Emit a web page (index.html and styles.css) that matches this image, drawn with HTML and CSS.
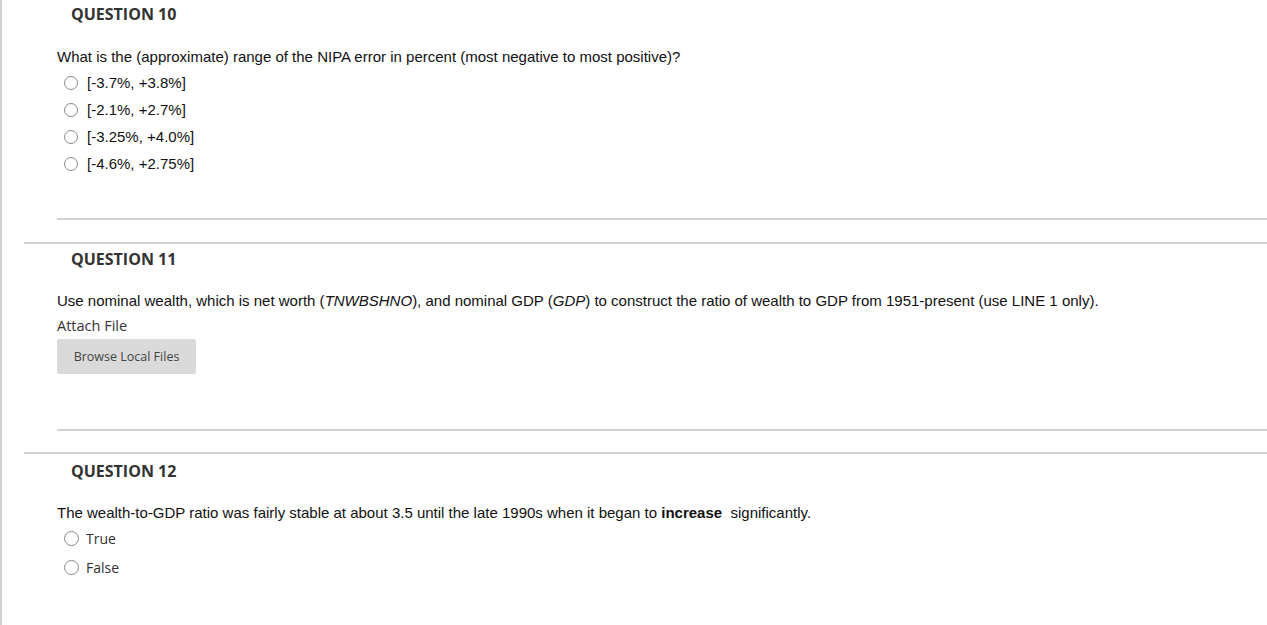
FILE: index.html
```html
<!DOCTYPE html>
<html>
<head>
<meta charset="utf-8">
<link rel="stylesheet" href="styles.css">
</head>
<body>
<div class="page">
  <section class="question q10">
    <h3 class="qtitle">QUESTION 10</h3>
    <p class="qtext">What is the (approximate) range of the NIPA error in percent (most negative to most positive)?</p>
    <ul class="options arial">
      <li><span class="radio"></span>[-3.7%, +3.8%]</li>
      <li><span class="radio"></span>[-2.1%, +2.7%]</li>
      <li><span class="radio"></span>[-3.25%, +4.0%]</li>
      <li><span class="radio"></span>[-4.6%, +2.75%]</li>
    </ul>
    <div class="sep sep-10"></div>
  </section>
  <section class="question q11">
    <h3 class="qtitle">QUESTION 11</h3>
    <p class="qtext">Use nominal wealth, which is net worth (<i>TNWBSHNO</i>), and nominal GDP (<i>GDP</i>) to construct the ratio of wealth to GDP from 1951-present (use LINE 1 only).</p>
    <div class="attach">Attach File</div>
    <button class="browse">Browse Local Files</button>
    <div class="sep sep-11"></div>
  </section>
  <section class="question q12">
    <h3 class="qtitle">QUESTION 12</h3>
    <p class="qtext">The wealth-to-GDP ratio was fairly stable at about 3.5 until the late 1990s when it began to <b>increase</b>&nbsp; significantly.</p>
    <ul class="options sans">
      <li><span class="radio"></span>True</li>
      <li><span class="radio"></span>False</li>
    </ul>
  </section>
</div>
</body>
</html>
```
FILE: styles.css
```css
html, body {
  margin: 0;
  padding: 0;
  background: #fff;
}
.page {
  min-height: 625px;
  border-left: 2px solid #d0d0d0;
  display: flex;
  flex-direction: column;
  padding-left: 22px;
}
.question {
  display: flex;
  flex-direction: column;
  padding-left: 33px;
}
.q11, .q12 {
  border-top: 2px solid #d3d3d3;
}
.qtitle {
  margin: 0;
  padding-left: 14px;
  font-family: "Open Sans", sans-serif;
  font-weight: 700;
  font-size: 16px;
  line-height: 24px;
  color: #333;
}
.q10 .qtitle { margin-top: 2px; }
.q11 .qtitle { margin-top: 3px; }
.q12 .qtitle { margin-top: 5px; }
.qtext {
  margin: 21px 0 0 0;
  font-family: "Liberation Sans", Arial, sans-serif;
  font-size: 15px;
  line-height: 18px;
  color: #111;
}
.q10 .qtext { margin-top: 22px; }
.options {
  list-style: none;
  margin: 3px 0 0 0;
  padding: 0 0 0 7px;
}
.options li {
  display: flex;
  align-items: center;
  color: #111;
}
.options.arial li {
  font-family: "Liberation Sans", Arial, sans-serif;
  font-size: 15px;
  height: 27px;
}
.options.sans li {
  font-family: "Open Sans", sans-serif;
  font-size: 14px;
  height: 29px;
  color: #333;
}
.options.sans { margin-top: 2px; }
.radio {
  width: 12px;
  height: 12px;
  border: 1px solid #8a8a8a;
  border-radius: 50%;
  margin-right: 9px;
  flex: none;
}
.options.sans .radio { margin-right: 7px; width: 13px; height: 13px; }
.sep {
  border-top: 2px solid #d3d3d3;
  margin-right: 0;
}
.sep-10 { margin-top: 41px; margin-bottom: 22px; }
.sep-11 { margin-top: 55px; margin-bottom: 21px; }
.attach {
  margin-top: 6px;
  font-family: "Open Sans", sans-serif;
  font-size: 14.5px;
  line-height: 20px;
  color: #333;
}
.browse {
  align-self: flex-start;
  margin-top: 3px;
  width: 139px;
  height: 35px;
  border: none;
  border-radius: 2px;
  background: #dadada;
  font-family: "Open Sans", sans-serif;
  font-size: 12.5px;
  color: #444;
  padding: 0;
}
```
